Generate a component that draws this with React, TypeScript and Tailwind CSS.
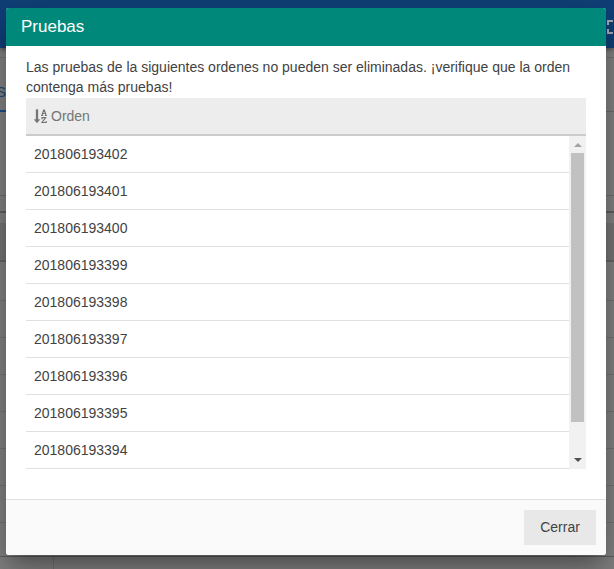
import React from "react";

const orders = [
  "201806193402",
  "201806193401",
  "201806193400",
  "201806193399",
  "201806193398",
  "201806193397",
  "201806193396",
  "201806193395",
  "201806193394",
];

function SortIcon() {
  return (
    <svg width="13" height="15" viewBox="0 0 13 15" className="shrink-0" fill="#757575" aria-hidden="true">
      <path d="M2 0.500h2v10h2L3 14 0 10.500h2z" stroke="#757575" strokeWidth="0.300" />
      <g fill="none" stroke="#757575" strokeWidth="1.200">
        <path d="M8 6 L9.700 1 H10.300 L12 6 M8.600 4.500 H11.400 M7.100 6.500 H9.200 M10.800 6.500 H12.900" />
        <path d="M8 10.200 V8.600 H11.700 L8 13.500 H12.200 V12" />
      </g>
    </svg>
  );
}

function Backdrop() {
  return (
    <div className="flex h-full flex-col bg-[#848484]">
      <div className="z-10 flex h-12 shrink-0 items-start justify-end bg-[#104079] pt-5 shadow-[0_2px_4px_rgba(0,0,0,0.35)]">
        <svg width="7" height="14" viewBox="0 0 7 14" fill="none" stroke="#a5abb5" strokeWidth="2" aria-hidden="true">
          <path d="M1 5V1h5M1 9v4h5" />
        </svg>
      </div>
      <div className="h-[10px] shrink-0 border-b border-[#747474]" />
      <div className="flex h-[54px] shrink-0 border-b border-[#6d6d6d]">
        <div className="h-[54px] w-10 border-b-2 border-[#17508d] pt-[25px] font-['Liberation_Sans',Arial,sans-serif] text-[15px] leading-[18px] text-[#194d82]">
          <span className="-ml-1">S</span>
        </div>
      </div>
      <div className="h-[84px] shrink-0 border-b border-[#707070]" />
      <div className="h-[17px] shrink-0 border-b-2 border-[#606060]" />
      <div className="h-[10px] shrink-0" />
      <div className="h-[39px] shrink-0 border-b-2 border-[#686868] bg-[#777777]" />
      <div className="h-[39px] shrink-0 border-b border-[#747474]" />
      {["a", "b", "c", "d", "e", "f"].map((row) => (
        <div key={row} className="h-[37px] shrink-0 border-b border-[#747474]" />
      ))}
      <div className="h-[34px] shrink-0 border-b border-[#606060]" />
      <div className="h-4 w-[54px] shrink-0 border-r border-[#747474]" />
    </div>
  );
}

function Scrollbar() {
  return (
    <div className="flex w-[17px] shrink-0 flex-col items-center bg-[#f1f1f1]">
      <div className="flex h-[17px] items-center justify-center">
        <svg width="8" height="4" viewBox="0 0 8 4" aria-hidden="true"><path d="M0 4 4 0 8 4z" fill="#a3a3a3" /></svg>
      </div>
      <div className="h-[269px] w-[13px] bg-[#c1c1c1]" />
      <div className="mt-auto flex h-[18px] items-center justify-center">
        <svg width="8" height="4" viewBox="0 0 8 4" aria-hidden="true"><path d="M0 0h8L4 4z" fill="#505050" /></svg>
      </div>
    </div>
  );
}

export default function App() {
  return (
    <div className="relative h-[569px] w-[614px] overflow-hidden font-['Liberation_Sans',Arial,sans-serif] text-[#424242]">
      <Backdrop />
      <div className="absolute inset-0 z-20 px-[6px] pt-2">
        <div className="flex h-[547px] w-[600px] flex-col overflow-hidden rounded-[3px] bg-white shadow-[0_11px_15px_-7px_rgba(0,0,0,0.25),0_24px_38px_3px_rgba(0,0,0,0.16),0_9px_46px_8px_rgba(0,0,0,0.12)]">
          <header className="flex h-[38px] shrink-0 items-center bg-[#00897b] px-[15px] text-[17px] text-white">
            <h1>Pruebas</h1>
          </header>
          <main className="h-[453px] px-5 pt-[11px]">
            <p className="h-[41px] text-[14px] leading-5">
              Las pruebas de la siguientes ordenes no pueden ser eliminadas. ¡verifique que la orden contenga más pruebas!
            </p>
            <div className="flex h-[38px] items-center gap-1 border-b-2 border-[#cbcbcb] bg-[#ededed] px-2 text-[14px] text-[#757575]">
              <SortIcon />
              <span>Orden</span>
            </div>
            <div className="flex h-[333px]">
              <div className="flex-1">
                {orders.map((order) => (
                  <div key={order} className="flex h-[37px] items-center border-b border-[#e0e0e0] px-2 text-[14px]">
                    {order}
                  </div>
                ))}
              </div>
              <Scrollbar />
            </div>
          </main>
          <footer className="flex flex-1 items-center justify-end border-t border-[#e0e0e0] bg-[#fafafa] px-[10px]">
            <button className="h-[35px] w-[72px] bg-[#e8e8e8] text-[14px]">Cerrar</button>
          </footer>
        </div>
      </div>
    </div>
  );
}
